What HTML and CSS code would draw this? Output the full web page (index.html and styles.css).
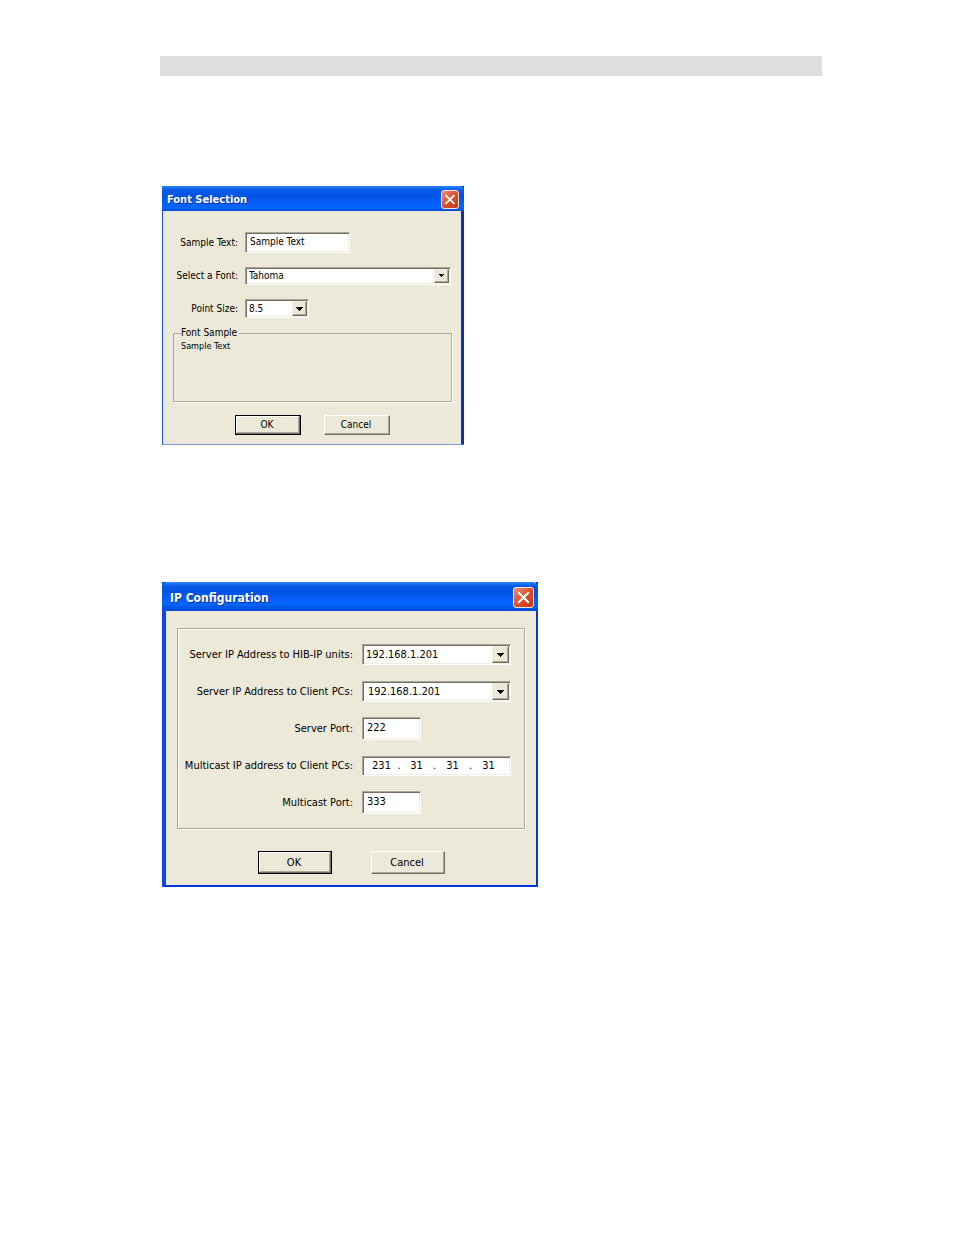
FILE: index.html
```html
<!DOCTYPE html>
<html lang="en">
<head>
<meta charset="utf-8">
<title>Font Selection and IP Configuration</title>
<link rel="stylesheet" href="styles.css">
</head>
<body>
<main class="page">
  <div class="page-header"></div>

  <section class="dialog dialog-font" aria-labelledby="font-title">
    <header class="titlebar">
      <h2 class="title" id="font-title">Font Selection</h2>
      <button class="close" type="button" aria-label="Close">
        <svg viewBox="0 0 18 18" aria-hidden="true"><path d="M4 4l10 10M14 4L4 14"/></svg>
      </button>
    </header>
    <form class="body">
      <div class="fields">
        <label for="sample">Sample Text:</label>
        <input class="box sample" id="sample" type="text" value="Sample Text">
        <label for="font">Select a Font:</label>
        <div class="combo combo-font">
          <select class="box" id="font"><option>Tahoma</option></select>
          <span class="drop"><svg viewBox="0 0 7 4" aria-hidden="true"><path d="M1 0h5v1H5v1H4v1H3V2H2V1H1z"/></svg></span>
        </div>
        <label for="size">Point Size:</label>
        <div class="combo combo-size">
          <select class="box" id="size"><option>8.5</option></select>
          <span class="drop"><svg viewBox="0 0 7 4" aria-hidden="true"><path d="M0 0h7v1H6v1H5v1H4v1H3V3H2V2H1V1H0z"/></svg></span>
        </div>
      </div>
      <fieldset class="preview">
        <legend>Font Sample</legend>
        <p class="preview-text">Sample Text</p>
      </fieldset>
      <div class="actions">
        <button class="btn btn-default" type="button">OK</button>
        <button class="btn" type="button">Cancel</button>
      </div>
    </form>
  </section>

  <section class="dialog dialog-ip" aria-labelledby="ip-title">
    <header class="titlebar">
      <h2 class="title" id="ip-title">IP Configuration</h2>
      <button class="close" type="button" aria-label="Close">
        <svg viewBox="0 0 18 18" aria-hidden="true"><path d="M4 4l10 10M14 4L4 14"/></svg>
      </button>
    </header>
    <form class="body">
      <div class="group fields">
        <label for="hib">Server IP Address to HIB-IP units:</label>
        <div class="combo">
          <select class="box" id="hib"><option>192.168.1.201</option></select>
          <span class="drop"><svg viewBox="0 0 7 4" aria-hidden="true"><path d="M0 0h7v1H6v1H5v1H4v1H3V3H2V2H1V1H0z"/></svg></span>
        </div>
        <label for="client">Server IP Address to Client PCs:</label>
        <div class="combo combo-indent">
          <select class="box" id="client"><option>192.168.1.201</option></select>
          <span class="drop"><svg viewBox="0 0 7 4" aria-hidden="true"><path d="M0 0h7v1H6v1H5v1H4v1H3V3H2V2H1V1H0z"/></svg></span>
        </div>
        <label for="port">Server Port:</label>
        <input class="box port" id="port" type="text" value="222">
        <label for="octet">Multicast IP address to Client PCs:</label>
        <div class="box address">
          <input id="octet" type="text" value="231"><span>.</span>
          <input type="text" value="31" aria-label="Second octet"><span>.</span>
          <input type="text" value="31" aria-label="Third octet"><span>.</span>
          <input type="text" value="31" aria-label="Fourth octet">
        </div>
        <label for="mport">Multicast Port:</label>
        <input class="box port" id="mport" type="text" value="333">
      </div>
      <div class="actions">
        <button class="btn btn-default" type="button">OK</button>
        <button class="btn" type="button">Cancel</button>
      </div>
    </form>
  </section>
</main>
</body>
</html>
```
FILE: styles.css
```css
* {
  box-sizing: border-box;
}

body {
  margin: 0;
  background: #fff;
  color: #000;
  font-family: "DejaVu Sans Condensed", "DejaVu Sans", sans-serif;
  font-size: 10px;
  line-height: 14px;
}

.page {
  padding: 56px 132px 56px 160px;
}

.page-header {
  height: 20px;
  background: #dedede;
}

.dialog {
  margin-left: 2px;
  background: #ece9d8;
}

.dialog-font {
  width: 302px;
  margin-top: 110px;
  border: solid #1c50c8;
  border-width: 0 3px 1px 1px;
  border-right-color: #0831c0;
  border-bottom-color: #7b96dc;
}

.dialog-ip {
  width: 376px;
  margin-top: 137px;
  border: solid #0a48e4;
  border-width: 0 2px 2px 4px;
  border-right-color: #0636d4;
  border-bottom-color: #0636d4;
}

.titlebar {
  display: flex;
  align-items: center;
  justify-content: space-between;
  height: 25px;
  margin: 0 -3px 0 -1px;
  padding: 2px 5px 0 5px;
  border-top-right-radius: 4px;
  background: linear-gradient(#2a86f8 0, #0a5ae8 4px, #0054e3 10px, #0560fa 18px, #0466ff 22px, #0048d0 100%);
}

.dialog-ip .titlebar {
  height: 29px;
  margin: 0 -2px 0 -4px;
  padding: 2px 4px 0 8px;
  border-radius: 5px 5px 0 0;
}

.title {
  margin: 0;
  color: #fff;
  font-size: 11px;
  font-weight: bold;
  line-height: 16px;
  text-shadow: 1px 1px #0a2f9c;
}

.dialog-ip .title {
  font-size: 12px;
}

.close {
  width: 18px;
  height: 19px;
  padding: 0;
  border: 1px solid #f4e4e4;
  border-radius: 3px;
  background: linear-gradient(135deg, #ee9078, #dd4f2a 50%, #c23a14);
}

.dialog-ip .close {
  width: 21px;
  height: 21px;
}

.close svg {
  display: block;
  width: 100%;
  height: 100%;
  fill: none;
  stroke: #fff;
  stroke-width: 2;
}

.fields {
  display: grid;
  align-items: center;
  justify-content: start;
}

.dialog-font .fields {
  grid-template: 21px 18px 19px / 75px auto;
  gap: 14px 7px;
  padding-top: 21px;
}

.fields label {
  text-align: right;
  white-space: nowrap;
}

.box {
  margin: 0;
  border: 1px solid;
  border-color: #aca899 #fff #fff #aca899;
  border-radius: 0;
  background: #fff;
  box-shadow: inset 1px 1px #716f64, inset -1px -1px #f1efe2;
  color: #000;
  font: inherit;
  outline: 0;
}

.sample {
  width: 105px;
  height: 21px;
  padding: 0 4px 3px;
}

.combo {
  display: grid;
  width: 149px;
  height: 21px;
}

.combo > * {
  grid-area: 1 / 1;
}

.combo select {
  width: 100%;
  height: 100%;
  padding: 0 3px;
  appearance: none;
}

.combo-indent select {
  padding-left: 5px;
}

.combo-font {
  width: 206px;
  height: 18px;
}

.combo-size {
  width: 64px;
  height: 19px;
}

.drop {
  display: grid;
  place-items: center;
  place-self: stretch end;
  width: 17px;
  margin: 2px;
  border: 1px solid;
  border-color: #f1efe2 #716f64 #716f64 #f1efe2;
  background: #ece9d8;
  box-shadow: inset -1px -1px #aca899;
  pointer-events: none;
}

.combo-font .drop,
.combo-size .drop {
  width: 15px;
}

.drop svg {
  width: 7px;
  height: 4px;
}

.preview {
  height: 75px;
  margin: 9px 9px 0 10px;
  padding: 0 7px;
  border: 1px solid #aca899;
  box-shadow: 1px 1px #fff;
}

.preview legend {
  height: 12px;
  padding: 0 2px 0 0;
  line-height: 12px;
}

.preview-text {
  margin: 0;
  font-size: 9px;
  line-height: 14px;
}

.actions {
  display: flex;
  gap: 23px;
}

.dialog-font .actions {
  padding: 13px 0 9px 72px;
}

.btn {
  width: 66px;
  height: 20px;
  padding: 0 2px 0 0;
  border: 1px solid;
  border-color: #fff #716f64 #716f64 #fff;
  border-radius: 0;
  background: #ece9d8;
  box-shadow: inset -1px -1px #aca899;
  color: #000;
  font: inherit;
}

.btn-default {
  border-color: #000;
  box-shadow: inset -1px -1px #716f64, inset 1px 1px #fff, inset -2px -2px #aca899;
}

.dialog-ip {
  font-size: 11px;
}

.group {
  grid-template: repeat(5, 23px) / 175px auto;
  gap: 14px 9px;
  margin: 17px 11px 0 11px;
  padding: 14px 0;
  border: 1px solid #aca899;
  box-shadow: 1px 1px #fff, inset 1px 1px #fff;
}

.port {
  width: 59px;
  height: 23px;
  padding: 0 4px 3px;
}

.address {
  display: grid;
  grid-template-columns: 25px 10px 25px 11px 25px 11px 25px;
  align-items: center;
  width: 149px;
  height: 20px;
  padding-left: 6px;
  text-align: center;
}

.address input {
  width: 100%;
  height: 16px;
  padding: 0;
  border: 0;
  background: none;
  font: inherit;
  text-align: center;
  outline: 0;
}

.dialog-ip .actions {
  gap: 39px;
  padding: 22px 0 11px 92px;
}

.dialog-ip .btn {
  width: 74px;
  height: 23px;
}
```
